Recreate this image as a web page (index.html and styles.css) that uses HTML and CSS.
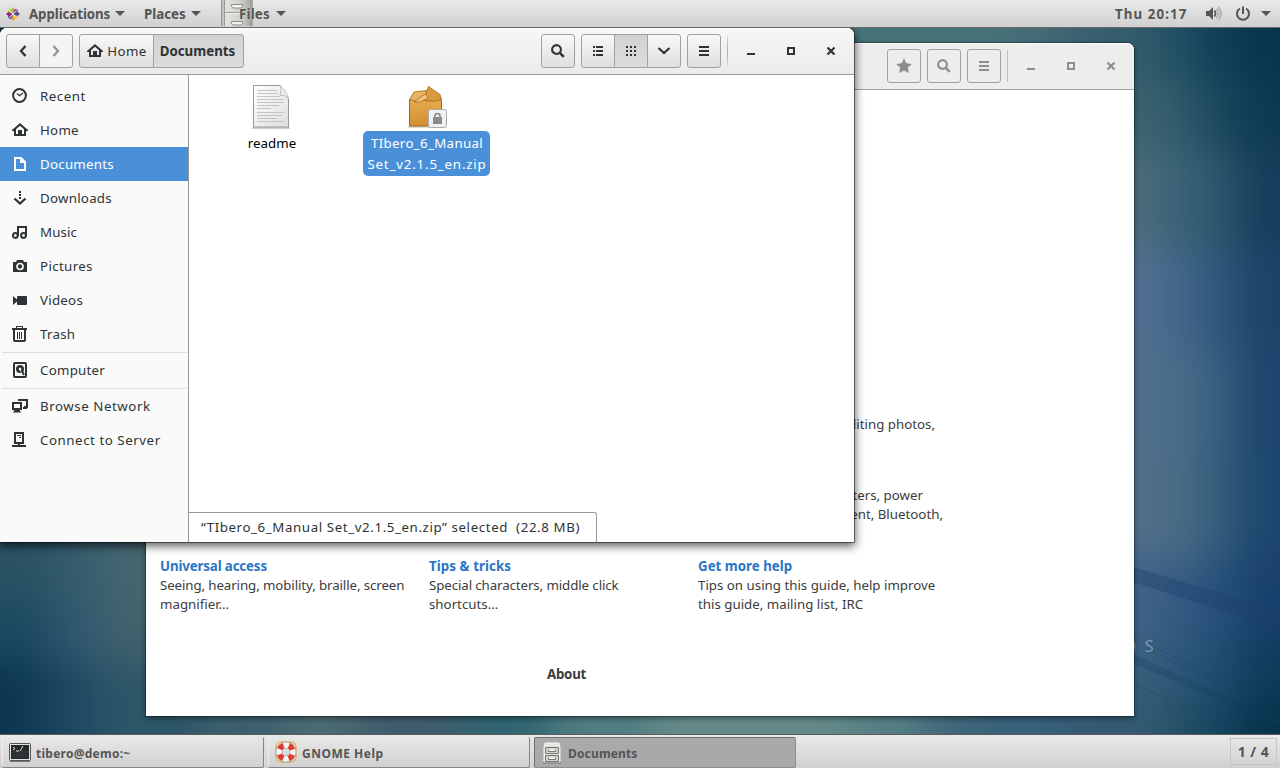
FILE: index.html
```html
<!DOCTYPE html>
<html lang="en">
<head>
<meta charset="utf-8">
<title>Documents</title>
<link rel="stylesheet" href="styles.css">
</head>
<body>
<svg class="defs" width="0" height="0">
  <defs>
    <linearGradient id="metal" x1="0" x2="1"><stop offset="0" stop-color="#a5a7a2"/><stop offset=".15" stop-color="#e4e5e1"/><stop offset=".6" stop-color="#cfd0cc"/><stop offset="1" stop-color="#a0a29d"/></linearGradient>
    <linearGradient id="paper" x1="0" x2="1" y2="1"><stop offset="0" stop-color="#fff"/><stop offset="1" stop-color="#dedede"/></linearGradient>
    <linearGradient id="box" x2="0" y2="1"><stop offset="0" stop-color="#e6aa50"/><stop offset="1" stop-color="#d2902f"/></linearGradient>
    <symbol id="home" viewBox="0 0 16 16"><path d="M8 1 0 8v1h2v5h12V9h2V8zM8 3.700l4 3.500V12h-2V8H6v4H4V7.200z" fill="currentColor"/></symbol>
    <symbol id="search" viewBox="0 0 16 16"><circle cx="6.500" cy="6.500" r="4.400" fill="none" stroke="currentColor" stroke-width="2.100"/><path d="m9.800 9.800 4 4" stroke="currentColor" stroke-width="2.500"/></symbol>
    <symbol id="menu" viewBox="0 0 16 16"><path d="M3 3h10v2H3zm0 4h10v2H3zm0 4h10v2H3z" fill="currentColor"/></symbol>
    <symbol id="min" viewBox="0 0 16 16"><path d="M4 10h8v2H4z" fill="currentColor"/></symbol>
    <symbol id="max" viewBox="0 0 16 16"><path d="M5 5h6v6H5z" fill="none" stroke="currentColor" stroke-width="2"/></symbol>
    <symbol id="close" viewBox="0 0 16 16"><path d="m4.500 4.500 7 7m0-7-7 7" stroke="currentColor" stroke-width="2.200"/></symbol>
  </defs>
</svg>
<div class="desktop">
  <header class="panel top">
    <svg class="logo" width="14" height="14" viewBox="0 0 14 14"><path d="M7 0 9.500 3 7 6.500 4.500 3z" fill="#a4c639"/><path d="M14 7l-3 2.500L7.500 7 11 4.500z" fill="#4a4990"/><path d="m7 14-2.500-3L7 7.500 9.500 11z" fill="#efa724"/><path d="M0 7l3-2.500L6.500 7 3 9.500z" fill="#932279"/><path d="M2 2h3.500L7 6.500 2 5z" fill="#b6d25a"/><path d="M8.500 2H12v3L7 6.500z" fill="#a8449a"/><path d="M12 9v3H8.500L7 7.500z" fill="#f2b84c"/><path d="M2 9l5-1.500L5.500 12H2z" fill="#5f5ea6"/><path d="m2 2 10 10M12 2 2 12" stroke="#eee" stroke-width=".8"/></svg>
    <span class="pm apps">Applications</span><i class="tri"></i>
    <span class="pm places">Places</span><i class="tri"></i>
    <div class="filesmenu">
      <svg width="32" height="26" viewBox="0 0 32 26"><path d="M0 0h32v26H0z" fill="url(#metal)"/><path d="M.5 0v26M3.500 0v26M29.500 0v26M4 12.500h25" fill="none" stroke="#9a9c96"/><path d="M4 13.700h25" stroke="#f2f2ef"/><g fill="#f2f2ef" stroke="#8b8d87"><path d="M10.500 4.500h11v2l-1.500 1.500h-8l-1.500-1.500z"/><path d="M10.500 21.500h11v2L20 25h-8l-1.500-1.500z"/></g></svg>
      <span class="pm files">Files</span>
    </div><i class="tri"></i>
    <span class="pm clock">Thu 20:17</span>
    <svg class="vol" width="16" height="16" viewBox="0 0 16 16"><path d="M0 5h3l4-4v13l-4-4H0z" fill="#555"/><path d="M8.500 4.500q2 3 0 6" fill="none" stroke="#555" stroke-width="1.700"/><path d="M10.500 2.800q3.500 4.700 0 9.400M12.500 1q5 6.500 0 13" fill="none" stroke="#a9a9a9" stroke-width="1.500"/></svg>
    <svg class="power" width="16" height="16" viewBox="0 0 16 16"><path d="M5 2.500A6 6 0 1 0 11 2.500" fill="none" stroke="#555" stroke-width="2"/><path d="M8 .5V8" stroke="#555" stroke-width="2"/></svg>
    <i class="tri"></i>
  </header>

  <main class="space">
    <svg class="wall" width="1280" height="706" viewBox="0 28 1280 706">
      <defs><filter id="soft" filterUnits="userSpaceOnUse" x="-80" y="-60" width="1440" height="920" color-interpolation-filters="sRGB"><feGaussianBlur stdDeviation="19"/></filter></defs>
      <g filter="url(#soft)">
        <path d="M-80-60h1440v920H-80z" fill="#2c5568"/>
        <path d="M-80-60H100V200H-80z" fill="#0b3752"/>
        <path d="M780-60h220V120H780z" fill="#47747a"/>
        <path d="M1000-60h60V120h-60z" fill="#466c76"/>
        <path d="M1060-60h50V120h-50z" fill="#3a6070"/>
        <path d="M1110-60h50V80h-50z" fill="#335c6a"/><path d="M1160-60h40V80h-40z" fill="#1f4d63"/><path d="M1200-60h40V80h-40z" fill="#123f57"/><path d="M1240-60h120V80h-120z" fill="#09344e"/>
        <path d="M1060 80h100v70h-100z" fill="#3c6270"/><path d="M1160 80h40v70h-40z" fill="#305a6a"/><path d="M1200 80h40v70h-40z" fill="#1a475d"/><path d="M1240 80h120v70h-120z" fill="#0e3953"/>
        <path d="M1060 150h100v100h-100z" fill="#4c6c7c"/><path d="M1160 150h40v100h-40z" fill="#3a6276"/><path d="M1200 150h40v100h-40z" fill="#2c566c"/><path d="M1240 150h120v100h-120z" fill="#143e5b"/>
        <path d="M1060 250h100v100h-100z" fill="#527292"/><path d="M1160 250h40v100h-40z" fill="#42668a"/><path d="M1200 250h40v100h-40z" fill="#2f567a"/><path d="M1240 250h120v100h-120z" fill="#1e436a"/>
        <path d="M1060 350h100v100h-100z" fill="#50708c"/><path d="M1160 350h40v100h-40z" fill="#4a6c88"/><path d="M1200 350h40v100h-40z" fill="#365f80"/><path d="M1240 350h120v100h-120z" fill="#1d456d"/>
        <path d="M1060 450h100v110h-100z" fill="#506f8a"/><path d="M1160 450h40v110h-40z" fill="#4a6c84"/><path d="M1200 450h40v110h-40z" fill="#335c7c"/><path d="M1240 450h120v110h-120z" fill="#1d466e"/>
        <path d="M1060 560h100v80h-100z" fill="#40628a"/><path d="M1160 560h40v80h-40z" fill="#345a80"/><path d="M1200 560h40v80h-40z" fill="#26507a"/><path d="M1240 560h120v80h-120z" fill="#18406c"/>
        <path d="M1060 640h100v60h-100z" fill="#38607c"/><path d="M1160 640h40v60h-40z" fill="#2c567a"/><path d="M1200 640h40v60h-40z" fill="#204c70"/><path d="M1240 640h120v60h-120z" fill="#103b5b"/>
        <path d="M-80 400H50v200H-80z" fill="#2a5264"/><path d="M50 400h50v200H50z" fill="#345c6c"/><path d="M100 400h100v200H100z" fill="#456570"/>
        <path d="M-80 600H50v60H-80z" fill="#1c4a60"/><path d="M50 600h50v60H50z" fill="#305870"/><path d="M100 600h100v60H100z" fill="#42626c"/>
        <path d="M-80 660H40v200H-80z" fill="#0c3652"/><path d="M40 660h50v200H40z" fill="#1c4561"/><path d="M90 660h110v200H90z" fill="#2c5568"/>
        <path d="M200 680h80v180h-80z" fill="#3c5f6e"/><path d="M280 680h80v180h-80z" fill="#4a6a72"/><path d="M360 680h100v180H360z" fill="#405c6c"/><path d="M460 680h90v180h-90z" fill="#2f6570"/><path d="M550 680h100v180H550z" fill="#507c82"/><path d="M650 680h200v180H650z" fill="#648a88"/><path d="M850 680h70v180h-70z" fill="#557f84"/><path d="M920 680h60v180h-60z" fill="#40687a"/><path d="M980 680h90v180h-90z" fill="#38607a"/>
        <path d="M1070 700h90v160h-90z" fill="#345a72"/><path d="M1160 700h40v160h-40z" fill="#245064"/><path d="M1200 700h40v160h-40z" fill="#144460"/><path d="M1240 700h120v160h-120z" fill="#07324b"/>
      </g>
      <path d="M1130 566 1280 611v18L1130 581z" fill="#1d3f6c" opacity=".38"/>
      <path d="M1130 653 1280 720v6L1130 662z" fill="#153c5c" opacity=".25"/>
      <path d="m1150 645 130 62M1150 650l130 64M1130 682l120 55" stroke="#1b4163" opacity=".3" fill="none"/>
    </svg>
    <div class="brand">CENTOS</div>

    <section class="win help">
      <div class="bar">
        <button class="btn"><svg width="16" height="16" viewBox="0 0 16 16"><path d="m8 .3 2.400 4.900 5.400.7-4 3.700 1.100 5.500L8 12.400l-4.900 2.700 1.100-5.500-4-3.700 5.400-.7z" fill="currentColor"/></svg></button>
        <button class="btn"><svg width="16" height="16"><use href="#search"/></svg></button>
        <button class="btn"><svg width="16" height="16"><use href="#menu"/></svg></button>
        <span class="sep"></span>
        <span class="ctl"><svg width="16" height="16"><use href="#min"/></svg></span><span class="ctl"><svg width="16" height="16"><use href="#max"/></svg></span><span class="ctl"><svg width="16" height="16"><use href="#close"/></svg></span>
      </div>
      <div class="topics">
        <div class="covered"><p class="e1">editing photos,</p><p class="e2">printers, power</p><p class="e3">management, Bluetooth,</p></div>
        <div class="cols">
          <article><h3>Universal access</h3><p class="t1">Seeing, hearing, mobility, braille, screen</p><p>magnifier…</p></article>
          <article><h3 class="h2">Tips &amp; tricks</h3><p class="t1">Special characters, middle click</p><p>shortcuts…</p></article>
          <article><h3 class="h3">Get more help</h3><p>Tips on using this guide, help improve</p><p>this guide, mailing list, IRC</p></article>
        </div>
        <div class="about">About</div>
      </div>
    </section>

    <section class="win nautilus">
      <div class="bar">
        <div class="group nav"><button class="btn"><svg width="16" height="16" viewBox="0 0 16 16"><path d="M10.500 3 6 8l4.500 5" fill="none" stroke="currentColor" stroke-width="2.300"/></svg></button><button class="btn off"><svg width="16" height="16" viewBox="0 0 16 16"><path d="M5.500 3 10 8l-4.500 5" fill="none" stroke="currentColor" stroke-width="2.300"/></svg></button></div>
        <div class="group path"><button class="btn crumb"><svg width="16" height="16"><use href="#home"/></svg><span class="c1">Home</span></button><button class="btn crumb on"><span class="c2">Documents</span></button></div>
        <button class="btn find"><svg width="16" height="16"><use href="#search"/></svg></button>
        <div class="group view">
          <button class="btn"><svg width="16" height="16" viewBox="0 0 16 16"><path d="M3 3h2v2H3zm3 0h7v2H6zM3 7h2v2H3zm3 0h7v2H6zM3 11h2v2H3zm3 0h7v2H6z" fill="currentColor"/></svg></button>
          <button class="btn on"><svg width="16" height="16" viewBox="0 0 16 16"><path d="M3 3h2v2H3zm4 0h2v2H7zm4 0h2v2h-2zM3 7h2v2H3zm4 0h2v2H7zm4 0h2v2h-2zM3 11h2v2H3zm4 0h2v2H7zm4 0h2v2h-2z" fill="currentColor"/></svg></button>
          <button class="btn"><svg width="16" height="16" viewBox="0 0 16 16"><path d="m2.500 5 5.500 5 5.500-5" fill="none" stroke="currentColor" stroke-width="2.200"/></svg></button>
        </div>
        <button class="btn burger"><svg width="16" height="16"><use href="#menu"/></svg></button>
        <span class="sep"></span>
        <span class="ctl"><svg width="16" height="16"><use href="#min"/></svg></span><span class="ctl"><svg width="16" height="16"><use href="#max"/></svg></span><span class="ctl"><svg width="16" height="16"><use href="#close"/></svg></span>
      </div>
      <div class="body">
        <nav class="side">
          <a class="w3"><svg viewBox="0 0 16 16"><circle cx="7.500" cy="7.500" r="6.400" fill="none" stroke="currentColor" stroke-width="2"/><path d="m5 5.500 2.500 2.300L11 5" fill="none" stroke="currentColor" stroke-width="1.200"/></svg><span>Recent</span></a>
          <a><svg><use href="#home"/></svg><span>Home</span></a>
          <a class="sel"><svg viewBox="0 0 16 16"><path d="M3 2h6l4 4v8H3z" fill="none" stroke="currentColor" stroke-width="2"/><path d="M8 2v5h5z" fill="currentColor"/></svg><span>Documents</span></a>
          <a><svg viewBox="0 0 16 16"><path d="M7 1h2v2H7zm0 3h2v2H7zm0 3h2v2H7z" fill="currentColor"/><path d="m2.500 8.500 5.500 5 5.500-5" fill="none" stroke="currentColor" stroke-width="2.300"/></svg><span>Downloads</span></a>
          <a class="w1"><svg viewBox="0 0 16 16"><g fill="none" stroke="currentColor" stroke-width="2"><circle cx="3.300" cy="11.500" r="2.400"/><circle cx="11.500" cy="11.500" r="2.400"/><path d="M6 12V3h8v9"/></g></svg><span>Music</span></a>
          <a class="w2"><svg viewBox="0 0 16 16"><path d="M1 4h3l1-2h6l1 2h3v10H1z" fill="currentColor"/><circle cx="8" cy="8.500" r="3" fill="none" stroke="#fafafa" stroke-width="1.700"/></svg><span>Pictures</span></a>
          <a><svg viewBox="0 0 16 16"><path d="M1 4l4 3.500V5q0-1 1-1h8q1 0 1 1v7q0 1-1 1H6q-1 0-1-1V9.500L1 13z" fill="currentColor"/></svg><span>Videos</span></a>
          <a><svg viewBox="0 0 16 16"><path d="M0 2h15v2H0zM4 0h7v2h-1V1H5v1H4z" fill="currentColor"/><path d="M2 4v10q0 1 1 1h9q1 0 1-1V4" fill="none" stroke="currentColor" stroke-width="2"/><path d="M5.500 6v7m2-7v7m2-7v7" stroke="currentColor"/></svg><span>Trash</span></a>
          <hr>
          <a><svg viewBox="0 0 16 16"><rect x="2" y="1" width="12" height="14" rx="1" fill="none" stroke="currentColor" stroke-width="2"/><circle cx="8" cy="7" r="4" fill="currentColor"/><circle cx="8" cy="7" r="1.300" fill="#fafafa"/><path d="m8 8 3.500 4.500" stroke="#fafafa" stroke-width="1"/><path d="m10 9 2 4" stroke="currentColor" stroke-width="2"/></svg><span>Computer</span></a>
          <hr>
          <a class="w3"><svg viewBox="0 0 16 16"><path d="M7 3V2h8v7h-3" fill="none" stroke="currentColor" stroke-width="2"/><path d="M1 5h8v6H1z" fill="none" stroke="currentColor" stroke-width="2"/><path d="M3 11h4l2 3.500H1zM11 9h4v2h-4z" fill="currentColor"/></svg><span>Browse Network</span></a>
          <a class="w3"><svg viewBox="0 0 16 16"><path d="M3 1h8v10H3z" fill="none" stroke="currentColor" stroke-width="2"/><path d="M5 3.500h4M7 5.500h2" stroke="currentColor"/><path d="M6 11h2v2h6v2H0v-2h6z" fill="currentColor"/></svg><span>Connect to Server</span></a>
        </nav>
        <div class="content">
          <figure class="readme"><svg width="42" height="46" viewBox="0 0 42 46"><path d="M2 43h38v2H2z" fill="#000" opacity=".18"/><path d="M3.500 1.500H30L38.500 15v28h-35z" fill="url(#paper)" stroke="#999" stroke-linejoin="round"/><path d="M30 1.500q2 5 0 10 6-1 8.500 3.500-1-7-8.500-13.500z" fill="#eee" stroke="#aaa" stroke-width=".7"/><path d="M7 6.500h20M7 9.500h21M7 12.500h23M7 15.500h27M7 18.500h27M7 21.500h22M7 24.500h14M7 28.500h27M7 31.500h25M7 34.500h20M7 37.500h27" stroke="#c4c4c4"/></svg><figcaption><span>readme</span></figcaption></figure>
          <figure class="zip"><svg width="42" height="46" viewBox="-1 -1 42 46"><path d="M2 41h34v2H2z" fill="#000" opacity=".15"/><path d="M3.500 14.500h32V41h-32z" fill="url(#box)" stroke="#a0691a"/><path d="M3.500 14.500 8 7l12-1.500 2 9-11 2z" fill="#e9b565" stroke="#a36a14" stroke-width=".8"/><path d="M20 8 22.500 1.500 34 9.500l1.500 5L30 16H20z" fill="#d99a40" stroke="#a36a14" stroke-width=".8"/><path d="M8 17 19 9l3.500 4-8.500 4z" fill="#f1c580" stroke="#a36a14" stroke-width=".8"/><rect x="22.500" y="24.500" width="18" height="18" rx="2" fill="#f1f1f1" stroke="#aaa"/><path d="M27 32h9v7h-9z" fill="#8b8b8b"/><path d="M29 32v-1q0-2.500 2.500-2.500T34 31v1" fill="none" stroke="#8b8b8b" stroke-width="1.700"/></svg><figcaption class="picked"><span class="f2">TIbero_6_Manual</span><br><span class="f3">Set_v2.1.5_en.zip</span></figcaption></figure>
          <div class="status"><span>“TIbero_6_Manual Set_v2.1.5_en.zip” selected&nbsp; (22.8 MB)</span></div>
        </div>
      </div>
    </section>
  </main>

  <footer class="panel bottom">
    <div class="task t-term"><svg width="22" height="20" viewBox="0 0 22 20"><rect x=".5" y=".5" width="21" height="17" rx="1" fill="#e4e4e0" stroke="#555"/><path d="M2 2h18v14H2z" fill="#20282a"/><path d="M3 8h16M3 10h16M3 12h16M3 14h16" stroke="#3b4644" stroke-width=".8"/><path d="m4 4 2 1.500L4 7M7 8h3M11 8l3-5" fill="none" stroke="#ddd"/><path d="M1 18.500h20" stroke="#777"/></svg><span class="k1">tibero@demo:~</span></div>
    <div class="task t-help"><svg width="22" height="22" viewBox="0 0 22 22"><rect x="1" y="1" width="20" height="20" rx="5" fill="none" stroke="#e3b36b" stroke-width="1.500"/><circle cx="11" cy="11" r="7" fill="none" stroke="#888" stroke-width="6.500"/><circle cx="11" cy="11" r="7" fill="none" stroke="#f5f5f3" stroke-width="5.500"/><circle cx="11" cy="11" r="7" fill="none" stroke="#e33a30" stroke-width="5.500" stroke-dasharray="5.500" stroke-dashoffset="-2.750"/></svg><span class="k2">GNOME Help</span></div>
    <div class="task t-docs active"><svg width="18" height="22" viewBox="0 0 18 22"><path d="M2 1h14l1 5v14H1V6z" fill="#e4e5e1" stroke="#f4f4f2"/><path d="M2.500 5.500h13v6h-13zm0 8h13v6h-13z" fill="#d0d2cc" stroke="#777970"/><path d="M5.500 7.500v2h7v-2M5.500 15.500v2h7v-2" fill="#fff" stroke="#70726b"/><path d="M0 21h18" stroke="#777"/></svg><span class="k3">Documents</span></div>
    <div class="pager">1 / 4</div>
  </footer>
</div>
</body>
</html>
```
FILE: styles.css
```css
* { box-sizing: border-box; }
body { margin: 0; font: 13.3px/20px "Noto Sans", sans-serif; color: #2e3436; }
p, h3, figure { margin: 0; }
svg { flex: none; display: block; }
.defs { position: absolute; }
.desktop { width: 1280px; height: 768px; display: grid; grid-template-rows: 28px 706px 34px; overflow: hidden; }
.panel { display: flex; align-items: center; background: linear-gradient(#e9e9e9, #d0d0d0); color: #555; font-weight: 700; position: relative; z-index: 3; }
.top { border-bottom: 1px solid #686868; padding: 0 9px 0 6px; }
.pm { white-space: nowrap; }
.apps { margin-left: 9px; width: 81px; letter-spacing: -.08px; }
.places { margin-left: 19px; width: 42px; }
.tri { border: 5px solid transparent; border-top-color: #555; border-bottom: 0; margin-left: 5px; flex: none; }
.filesmenu { margin-left: 20px; display: flex; width: 50px; height: 27px; align-items: center; }
.filesmenu svg { align-self: flex-start; }
.files { margin-left: -14px; text-shadow: 0 0 2px #ddd; letter-spacing: .2px; }
.clock { margin-left: auto; width: 72px; letter-spacing: 1.100px; }
.vol { margin-left: 19px; }
.power { margin-left: 13px; margin-right: 5px; }

.space { position: relative; background: #2c5568; }
.wall { position: absolute; inset: 0; }
.brand { position: absolute; left: 1045px; top: 608px; font-size: 16px; color: #8099a8; letter-spacing: 8.500px; padding-left: 5px; }
.win { position: absolute; display: flex; flex-direction: column; border-radius: 7px 7px 0 0; }
.help { left: 146px; top: 15px; width: 988px; height: 673px; background: #fff; box-shadow: 0 0 0 1px rgba(0,0,0,.25), 0 2px 6px rgba(0,0,0,.45); color: #3c3c3c; }
.nautilus { left: 0; top: 0; width: 854px; height: 514px; background: #fff; box-shadow: 0 0 0 1px rgba(0,0,0,.45), 0 3px 10px 1px rgba(0,0,0,.65); }
.bar { height: 47px; flex: none; display: flex; align-items: center; border-bottom: 1px solid #a1a1a1; border-radius: 7px 7px 0 0; box-shadow: inset 0 1px #fff; }
.help .bar { background: #ededed; color: #8b8e8f; justify-content: flex-end; padding-right: 3px; }
.nautilus .bar { background: linear-gradient(#f7f7f7, #ebebeb); padding: 0 3px 0 6px; border-bottom-color: #999; }
.btn { width: 34px; height: 34px; padding: 0; border: 1px solid #a1a1a1; border-radius: 3px; background: linear-gradient(#f8f8f8, #dfdfdf); color: inherit; font: inherit; display: flex; align-items: center; justify-content: center; flex: none; }
.help .btn { background: #ededed; margin-right: 6px; }
.group { display: flex; }
.group .btn + .btn { margin-left: -1px; }
.group .btn:not(:first-child) { border-top-left-radius: 0; border-bottom-left-radius: 0; }
.group .btn:not(:last-child) { border-top-right-radius: 0; border-bottom-right-radius: 0; }
.btn.off { background: #f4f4f4; color: #919494; }
.btn.on { background: linear-gradient(#d2d2d2, #dcdcdc); }
.path { margin-left: 6px; }
.path .crumb:first-child { width: 75px; gap: 4px; letter-spacing: .4px; padding-left: 1px; }
.path .crumb:last-child { width: 91px; font-weight: 700; padding-right: 2px; }
.find { margin-left: auto; margin-right: 6px; }
.burger { margin-left: 6px; }
.sep { width: 1px; height: 32px; margin: 0 3px 0 6px; background: linear-gradient(#ddd, #aaa, #ddd); }
.help .sep { background: #bdbdbd; margin-left: 0; }
.ctl { width: 40px; display: flex; justify-content: center; }

.topics { flex: 1; display: flex; flex-direction: column; padding: 0 0 0 14px; line-height: 19px; white-space: nowrap; }
.covered { height: 467px; padding-top: 325px; width: 783px; display: flex; flex-direction: column; align-items: flex-end; }
.e1 { margin-right: 8px; }
.e2 { margin-top: 52px; margin-right: 20px; }
.cols { display: grid; grid-template-columns: repeat(3, 269px); height: 108px; }
.cols h3 { font: 700 13.3px/19px "Noto Sans", sans-serif; color: #2a76c6; letter-spacing: -.14px; }
.cols .h2 { letter-spacing: .08px; }
.cols .h3 { letter-spacing: 0; }
.t1 { letter-spacing: -.1px; }
.about { font-weight: 700; margin-left: 387px; letter-spacing: -.25px; }

.body { flex: 1; display: flex; min-height: 0; }
.side { width: 189px; background: #fafafa; border-right: 1px solid #999; padding-top: 4px; }
.side a { height: 34px; display: flex; align-items: center; padding-left: 12px; gap: 12px; white-space: nowrap; letter-spacing: .25px; }
.side a.w1 { letter-spacing: .1px; }
.side a.w2 { letter-spacing: .35px; }
.side a.w3 { letter-spacing: .55px; }
.side a svg { width: 16px; height: 16px; }
.side .sel { background: #4a90d9; color: #fff; }
.side hr { margin: 1px 1px 0 2px; border: 0; height: 1px; background: #dedede; }
.content { flex: 1; display: grid; grid-template-columns: 164px 146px; grid-template-rows: 1fr 30px; }
figure { padding-top: 9px; display: flex; flex-direction: column; align-items: center; white-space: nowrap; color: #000; }
figcaption { margin-top: 1px; padding: 2px 4px; line-height: 21px; text-align: center; height: 45px; border-radius: 5px; }
.readme figcaption { padding-left: 6px; }
.picked { background: #4a90d9; color: #fff; width: 127px; padding: 2px 0 2px 2px; }
.f2 { letter-spacing: .33px; }
.f3 { letter-spacing: .82px; }
.status { grid-column: 1 / 3; width: 408px; border: 1px solid #999; border-width: 1px 1px 0 0; padding: 4px 0 0 12px; border-radius: 0 3px 0 0; white-space: nowrap; letter-spacing: .6px; }

.bottom { border-top: 1px solid #5c5c5c; align-items: stretch; padding: 2px 3px 0 2px; font-size: 12px; }
.task { display: flex; align-items: center; height: 31px; border: 1px solid #858585; border-width: 0 1px 1px 0; padding: 0 0 0 7px; gap: 5px; box-shadow: inset 1px 0 #eee, 1px 0 #ddd; white-space: nowrap; border-radius: 2px; }
.t-term { width: 262px; }
.t-term svg { margin-top: 2px; }
.t-help { width: 262px; margin-left: 4px; }
.task span { padding-top: 3px; }
.t-docs { width: 262px; margin-left: 4px; gap: 7px; padding-left: 8px; }
.k1 { letter-spacing: .25px; }
.k2 { letter-spacing: .5px; }
.k3 { letter-spacing: .15px; }
.active { background: #a9a9a9; border: 1px solid #8c8c8c; border-top-color: #707070; border-left-color: #707070; box-shadow: none; }
.pager { margin-left: auto; width: 47px; height: 27px; margin-top: 1px; border: 1px solid #c6c6c6; text-align: center; line-height: 26px; font-size: 14px; letter-spacing: .5px; }
```
